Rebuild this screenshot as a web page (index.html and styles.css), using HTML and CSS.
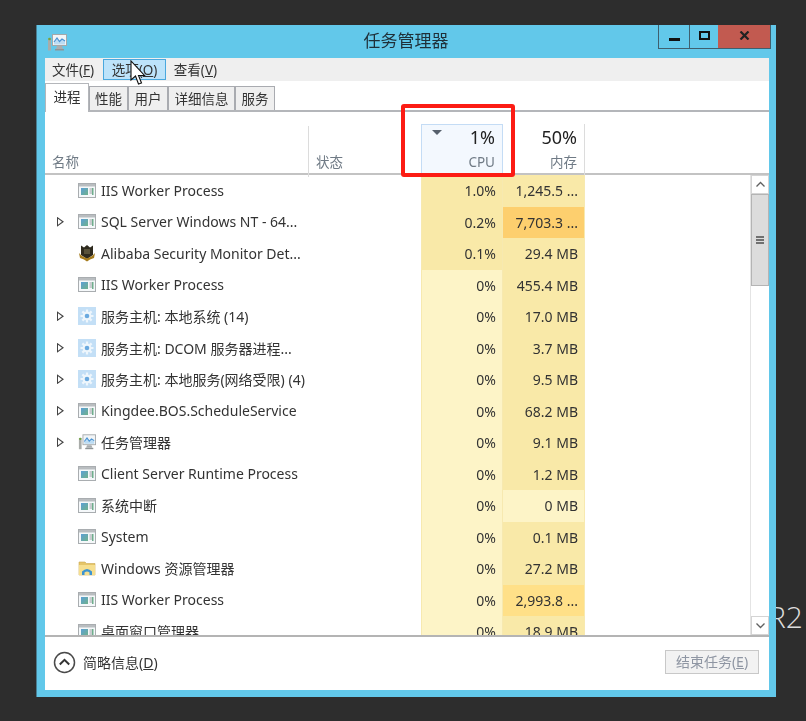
FILE: index.html
```html
<!DOCTYPE html>
<html lang="zh-CN">
<head>
<meta charset="utf-8">
<title>任务管理器</title>
<link rel="stylesheet" href="styles.css">
</head>
<body>
<svg class="defs" width="0" height="0" aria-hidden="true">
  <defs>
    <linearGradient id="g-app" x1="0" y1="0" x2="1" y2="1">
      <stop offset="0" stop-color="#5b9fd6"/>
      <stop offset="1" stop-color="#6fb28c"/>
    </linearGradient>
  </defs>
  <symbol id="i-app" viewBox="0 0 18 15">
    <rect x=".5" y=".5" width="17" height="14" fill="#f5f8fa" stroke="#a9adb0"/>
    <rect x="1" y="1" width="16" height="2.500" fill="#b9bdc0"/>
    <rect x="3" y="5" width="7" height="7" fill="url(#g-app)"/>
    <path d="M11.500 6h3.500M11.500 8h3.500M11.500 10h3.500" stroke="#9a9ea2" stroke-width="1"/>
    <rect x="14" y="5" width="1.500" height="7" fill="#6fae8c"/>
  </symbol>
  <symbol id="i-gear" viewBox="0 0 18 18">
    <rect width="18" height="18" fill="#c3dff6"/>
    <circle cx="9" cy="9" r="4.400" fill="#eef6fc"/>
    <path d="M9 2.500v3M9 12.500v3M2.500 9h3M12.500 9h3M4.400 4.400l2 2M11.600 11.600l2 2M13.600 4.400l-2 2M6.400 11.600l-2 2" stroke="#eef6fc" stroke-width="2.200"/>
    <circle cx="9" cy="9" r="2.300" fill="#6aa9df"/>
  </symbol>
  <symbol id="i-shield" viewBox="0 0 18 18">
    <path d="M3 1.500 6 3.500 9 1 12 3.500 15 1.500 15 11 9 15 3 11Z" fill="#2e2a1e"/>
    <path d="M1 9l3 3 5 2.500 5-2.500 3-3-1 5-4 1.500-3 2-3-2-4-1.500Z" fill="#a67c1d"/>
    <path d="M6 5h6v5H6Z" fill="#57513a"/>
  </symbol>
  <symbol id="i-folder" viewBox="0 0 18 18">
    <path d="M1 3h6l1.500 1.500H17V16H1Z" fill="#e5c568" stroke="#c9a850" stroke-width=".6"/>
    <path d="M1 6h16v10H1Z" fill="#f6df8f"/>
    <path d="M4 16v-3.500Q9 7.500 14 12.500V16h-2.500v-2.500Q9 11.500 6.500 13.500V16Z" fill="#3d94d1"/>
  </symbol>
  <symbol id="i-tm" viewBox="0 0 20 19">
    <rect x="5.500" y="1.500" width="14" height="11" fill="#f2f5f7" stroke="#a3a8aa"/>
    <path d="M7 9 10 5 12.500 8.500 15 6 18 8V11.500H7Z" fill="#bcdcf3"/>
    <path d="M7 9 10 5 12.500 8.500 15 6 18 8" fill="none" stroke="#4a93d4" stroke-width="1.200"/>
    <path d="M10 13h5l1 3H9Z" fill="#a9adaf"/>
    <rect x="8" y="16" width="9" height="1.500" fill="#8f9496"/>
    <rect x="1" y="5" width="3" height="12.500" fill="#a9aca9"/>
    <circle cx="2.500" cy="6" r="1.300" fill="#71a53f"/>
  </symbol>
</svg>

<div class="r2">R2</div>

<main class="window">
  <header class="titlebar">
    <svg class="title-icon"><use href="#i-tm"/></svg>
    <h1 class="title">任务管理器</h1>
    <div class="controls">
      <span class="ctl ctl-min"><i></i></span>
      <span class="ctl ctl-max"><i></i></span>
      <span class="ctl ctl-close">
        <svg width="11" height="9" viewBox="0 0 11 9"><path d="M1.500 .5 9.500 8.500M9.500 .5 1.500 8.500" stroke="#222" stroke-width="2.200"/></svg>
      </span>
    </div>
  </header>

  <div class="client">
    <nav class="menubar">
      <span class="menu menu-file">文件(<u>F</u>)</span>
      <span class="menu menu-hover">选项(<u>O</u>)</span>
      <span class="menu menu-view">查看(<u>V</u>)</span>
    </nav>

    <div class="tabs">
      <span class="tab tab-active">进程</span>
      <span class="tab tab-2">性能</span>
      <span class="tab tab-2w">用户</span>
      <span class="tab tab-4">详细信息</span>
      <span class="tab tab-2w">服务</span>
    </div>

    <div class="thead">
      <div class="th th-name"><span class="th-label">名称</span></div>
      <div class="th th-status"><span class="th-label">状态</span></div>
      <div class="th th-num th-cpu">
        <span class="sort"></span>
        <span class="th-value">1%</span>
        <span class="th-label">CPU</span>
      </div>
      <div class="th th-num th-mem">
        <span class="th-value">50%</span>
        <span class="th-label">内存</span>
      </div>
    </div>

    <div class="tbody">
      <div class="rows">
        <div class="row"><span class="name"><span class="exp"></span><svg class="ico"><use href="#i-app"/></svg><span class="txt">IIS Worker Process</span></span><span class="st"></span><span class="num h2">1.0%</span><span class="num h2">1,245.5 ...</span></div>
        <div class="row"><span class="name"><span class="exp on"></span><svg class="ico"><use href="#i-app"/></svg><span class="txt">SQL Server Windows NT - 64...</span></span><span class="st"></span><span class="num h2">0.2%</span><span class="num h4">7,703.3 ...</span></div>
        <div class="row"><span class="name"><span class="exp"></span><svg class="ico big"><use href="#i-shield"/></svg><span class="txt">Alibaba Security Monitor Det...</span></span><span class="st"></span><span class="num h2">0.1%</span><span class="num h2">29.4 MB</span></div>
        <div class="row"><span class="name"><span class="exp"></span><svg class="ico"><use href="#i-app"/></svg><span class="txt">IIS Worker Process</span></span><span class="st"></span><span class="num h1">0%</span><span class="num h2">455.4 MB</span></div>
        <div class="row"><span class="name"><span class="exp on"></span><svg class="ico big"><use href="#i-gear"/></svg><span class="txt">服务主机: 本地系统 (14)</span></span><span class="st"></span><span class="num h1">0%</span><span class="num h2">17.0 MB</span></div>
        <div class="row"><span class="name"><span class="exp on"></span><svg class="ico big"><use href="#i-gear"/></svg><span class="txt">服务主机: DCOM 服务器进程...</span></span><span class="st"></span><span class="num h1">0%</span><span class="num h2">3.7 MB</span></div>
        <div class="row"><span class="name"><span class="exp on"></span><svg class="ico big"><use href="#i-gear"/></svg><span class="txt">服务主机: 本地服务(网络受限) (4)</span></span><span class="st"></span><span class="num h1">0%</span><span class="num h2">9.5 MB</span></div>
        <div class="row"><span class="name"><span class="exp on"></span><svg class="ico"><use href="#i-app"/></svg><span class="txt">Kingdee.BOS.ScheduleService</span></span><span class="st"></span><span class="num h1">0%</span><span class="num h2">68.2 MB</span></div>
        <div class="row"><span class="name"><span class="exp on"></span><svg class="ico big"><use href="#i-tm"/></svg><span class="txt">任务管理器</span></span><span class="st"></span><span class="num h1">0%</span><span class="num h2">9.1 MB</span></div>
        <div class="row"><span class="name"><span class="exp"></span><svg class="ico"><use href="#i-app"/></svg><span class="txt">Client Server Runtime Process</span></span><span class="st"></span><span class="num h1">0%</span><span class="num h2">1.2 MB</span></div>
        <div class="row"><span class="name"><span class="exp"></span><svg class="ico"><use href="#i-app"/></svg><span class="txt">系统中断</span></span><span class="st"></span><span class="num h1">0%</span><span class="num h1">0 MB</span></div>
        <div class="row"><span class="name"><span class="exp"></span><svg class="ico"><use href="#i-app"/></svg><span class="txt">System</span></span><span class="st"></span><span class="num h1">0%</span><span class="num h2">0.1 MB</span></div>
        <div class="row"><span class="name"><span class="exp"></span><svg class="ico big"><use href="#i-folder"/></svg><span class="txt">Windows 资源管理器</span></span><span class="st"></span><span class="num h1">0%</span><span class="num h2">27.2 MB</span></div>
        <div class="row"><span class="name"><span class="exp"></span><svg class="ico"><use href="#i-app"/></svg><span class="txt">IIS Worker Process</span></span><span class="st"></span><span class="num h1">0%</span><span class="num h3">2,993.8 ...</span></div>
        <div class="row"><span class="name"><span class="exp"></span><svg class="ico"><use href="#i-app"/></svg><span class="txt">桌面窗口管理器</span></span><span class="st"></span><span class="num h1">0%</span><span class="num h2">18.9 MB</span></div>
      </div>
      <div class="scrollbar">
        <span class="sb-btn"><svg width="11" height="7" viewBox="0 0 11 7"><path d="M1.500 5.500 5.500 1.500 9.500 5.500" fill="none" stroke="#606060" stroke-width="1.300"/></svg></span>
        <div class="sb-track">
          <span class="sb-thumb"><i></i><i></i><i></i></span>
        </div>
        <span class="sb-btn"><svg width="11" height="7" viewBox="0 0 11 7"><path d="M1.500 1.500 5.500 5.500 9.500 1.500" fill="none" stroke="#606060" stroke-width="1.300"/></svg></span>
      </div>
    </div>

    <footer class="footer">
      <span class="less">
        <svg width="23" height="23" viewBox="0 0 23 23"><circle cx="11.500" cy="11.500" r="10" fill="#fff" stroke="#4a4a4a" stroke-width="1.500"/><path d="M6.800 13.500 11.500 8.800 16.200 13.500" fill="none" stroke="#333" stroke-width="2"/></svg>
        <span>简略信息(<u>D</u>)</span>
      </span>
      <span class="end-task">结束任务(<u>E</u>)</span>
    </footer>
  </div>
</main>

<div class="highlight"></div>
<svg class="cursor" width="18" height="26" viewBox="0 0 18 26"><path d="M1 1V20L5.500 16 8.500 24 11.500 23 8.500 15.500H14.500Z" fill="#fff" stroke="#111" stroke-width="1.100"/></svg>
</body>
</html>
```

FILE: styles.css
```css
* { box-sizing: border-box; }
html, body { height: 100%; }
body {
  margin: 0;
  padding: 25px 0 0 36px;
  background: #2d2d2d;
  overflow: hidden;
  font-family: "Noto Sans", "Noto Sans CJK SC", sans-serif;
  font-size: 14px;
  color: #333;
}
.defs { position: absolute; }
u { text-decoration: underline; text-underline-offset: 1px; }

.r2 {
  position: absolute;
  left: 768px;
  top: 599px;
  font-size: 30px;
  line-height: 36px;
  color: #dcdcdc;
  font-family: "Open Sans", sans-serif;
  font-weight: 300;
}

.window {
  position: relative;
  width: 740px;
  height: 672px;
  background: #62c8ea;
  border-left: 1px solid #4a7f93;
  display: flex;
  flex-direction: column;
  padding: 0 7px 7px 8px;
  filter: blur(.3px);
}
.titlebar {
  height: 33px;
  display: flex;
  align-items: flex-start;
  position: relative;
}
.title-icon { width: 20px; height: 19px; margin: 8px 0 0 2px; flex: none; }
.title {
  position: absolute;
  left: -2px; right: 0; top: 6px;
  margin: 0;
  text-align: center;
  font-size: 17px;
  line-height: 20px;
  font-weight: 400;
  color: #1f2f38;
}
.controls {
  position: absolute;
  right: -2px;
  top: 0;
  display: flex;
  height: 24px;
  border: 1px solid #3f5f6e;
  border-top: 0;
  background: #62c8ea;
}
.ctl { display: flex; align-items: center; justify-content: center; height: 100%; }
.ctl-min { width: 31px; border-right: 1px solid #3f5f6e; }
.ctl-min i { width: 11px; height: 3px; background: #111; margin-top: 5px; }
.ctl-max { width: 28px; }
.ctl-max i { width: 11px; height: 9px; border: 2px solid #111; margin-bottom: 2px; }
.ctl-close { width: 52px; background: #c25a50; }
.ctl-close svg { margin-bottom: 2px; }

.client {
  flex: 1;
  background: #fff;
  display: flex;
  flex-direction: column;
  min-height: 0;
}
.menubar {
  height: 23px;
  background: #efefef;
  display: flex;
  align-items: center;
  font-size: 13.500px;
}
.menu { padding: 0 6px; line-height: 20px; height: 21px; border: 1px solid transparent; }
.menu-file { padding-right: 7px; }
.menu-hover { background: #bde3fa; border-color: #4aa8de; padding: 0 7.500px; margin-left: 1px; }
.menu-view { margin-left: 1px; }

.tabs {
  height: 31px;
  flex: none;
  display: flex;
  align-items: flex-end;
  border-bottom: 2px solid #b4b6ba;
  font-size: 13.500px;
}
.tab {
  height: 24px;
  line-height: 24px;
  background: #efefef;
  border: 1px solid #a9abb0;
  border-bottom: 0;
  text-align: center;
}
.tab-2 { width: 39px; }
.tab-2w { width: 40px; }
.tab-4 { width: 67px; }
.tab-active {
  height: 29px;
  line-height: 26px;
  background: #fff;
  width: 44px;
  margin-bottom: -2px;
  border-color: #b4b6ba;
}

.thead {
  height: 63px;
  display: grid;
  grid-template-columns: 264px 112px 82px 82px;
  border-bottom: 2px solid #c3c3c3;
  flex: none;
}
.th { position: relative; display: flex; flex-direction: column; justify-content: flex-end; padding: 0 7px 6px; color: #6f7a85; }
.th-label { font-size: 13.500px; line-height: 18px; }
.th-name { border-right: 1px solid #dcdcdc; margin-top: 14px; }
.th-status { padding-left: 7px; }
.th-num { align-items: flex-end; margin-top: 12px; border-right: 1px solid #dcdcdc; }
.th-value { font-size: 18px; line-height: 24px; color: #222; margin-bottom: 4px; }
.th-cpu { background: #f3f8fe; border: 1px solid #c4dcf5; border-bottom: 0; }
.sort {
  position: absolute;
  left: 10px;
  top: 5px;
  width: 0;
  height: 0;
  border-left: 5px solid transparent;
  border-right: 5px solid transparent;
  border-top: 5px solid #56606c;
}

.tbody { flex: 1; display: flex; min-height: 0; position: relative; }
.rows { width: 705px; overflow: hidden; flex: none; }
.row {
  height: 31.500px;
  display: grid;
  grid-template-columns: 263px 113px 82px 82px;
}
.name { display: flex; align-items: center; min-width: 0; white-space: nowrap; overflow: hidden; padding-bottom: 1px; }
.exp { width: 7px; height: 10px; margin: 0 14px 0 12px; flex: none; }
.exp.on {
  clip-path: polygon(0 0, 100% 50%, 0 100%);
  background: #444;
  position: relative;
}
.exp.on::after {
  content: "";
  position: absolute;
  left: 1px; top: 2px;
  width: 4px; height: 6px;
  background: #fff;
  clip-path: polygon(0 0, 100% 50%, 0 100%);
}
.ico { width: 18px; height: 15px; margin-right: 5px; flex: none; }
.ico.big { height: 18px; }
.txt { color: #333; }
.num {
  display: flex;
  align-items: center;
  justify-content: flex-end;
  padding-right: 6px;
  border-right: 1px solid #f7e9b0;
  color: #333;
  white-space: nowrap;
}
.row .num:nth-child(3) { border-left: 1px solid #f7e9b0; }
.h1 { background: #fdf4c7; }
.h2 { background: #f9e9a8; }
.h3 { background: #ffe088; }
.h4 { background: #fdcf6e; }

.scrollbar {
  position: absolute;
  right: 0; top: 0; bottom: 0;
  width: 19px;
  display: flex;
  flex-direction: column;
  background: #fff;
  border-left: 1px solid #e4e4e4;
}
.sb-btn {
  height: 19px;
  flex: none;
  background: #fff;
  border: 1px solid #d4d4d4;
  display: flex;
  align-items: center;
  justify-content: center;
}
.sb-track { flex: 1; background: #fff; }
.sb-thumb {
  display: flex;
  flex-direction: column;
  align-items: center;
  justify-content: center;
  gap: 1px;
  height: 92px;
  background: #dcdcdc;
  border: 1px solid #b4b4b4;
}
.sb-thumb i { width: 8px; height: 2px; background: #707070; }

.footer {
  height: 55px;
  flex: none;
  border-top: 2px solid #b4b4b4;
  display: flex;
  align-items: center;
  justify-content: space-between;
  padding: 0 10px 3px 8px;
}
.less { display: flex; align-items: center; gap: 7px; }
.end-task {
  width: 94px;
  height: 24px;
  border: 1px solid #c8c8c8;
  background: #f2f2f2;
  color: #8f96a3;
  text-align: center;
  line-height: 22px;
}

.highlight {
  position: absolute;
  left: 401px;
  top: 104px;
  width: 114px;
  height: 73px;
  border: 4px solid #fc1c14;
  border-radius: 3px;
}
.cursor { position: absolute; left: 130px; top: 60px; }
```
